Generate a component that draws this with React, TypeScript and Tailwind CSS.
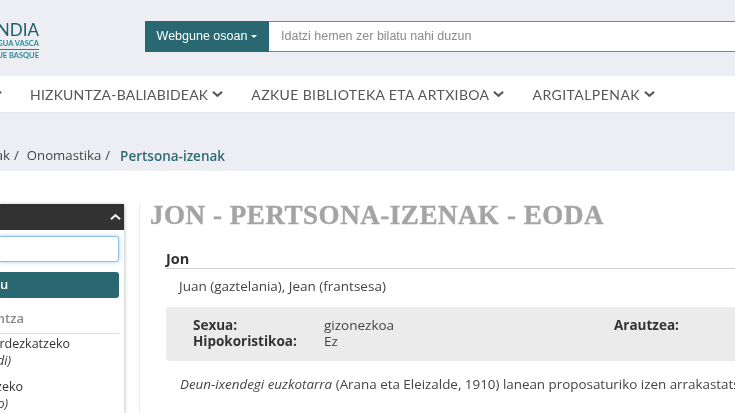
import React from "react";

const Chevron = ({ className = "" }: { className?: string }) => (
  <svg viewBox="0 0 12 8" className={"w-[11px] h-[8px] " + className} fill="none" stroke="#55565a" strokeWidth="2.2">
    <path d="M1 1.5 L6 6 L11 1.5" />
  </svg>
);

const NavItem = ({ label, textClass }: { label: string; textClass: string }) => (
  <div className="flex items-center gap-[4px] ml-[28px]">
    <span className={"whitespace-nowrap text-[14px] text-[#55565a] " + textClass}>{label}</span>
    <Chevron />
  </div>
);

export default function App() {
  return (
    <div className="w-[735px] h-[413px] overflow-hidden bg-white font-['Open_Sans',sans-serif] blur-[0.5px]">
      <div className="bg-[#eceef3] h-[171px] flex flex-col">
        <div className="h-[76px] flex items-start">
          <div className="w-[145px] shrink-0 pt-[21px]">
            <div className="w-[39px] overflow-hidden flex flex-col items-end text-[#1d5f6c]">
              <div className="font-['Lato',sans-serif] text-[17px] leading-[17px] whitespace-nowrap">EUSKALTZAINDIA</div>
              <div className="mt-[2px] w-[39px] flex justify-end border-b border-[#2a7f88] pb-[1px]">
                <span className="font-['Lato',sans-serif] text-[7.5px] leading-[8px] font-bold whitespace-nowrap text-[#2a8a94]">LENGUA VASCA</span>
              </div>
              <div className="w-[39px] flex justify-end mt-[1px]">
                <span className="font-['Lato',sans-serif] text-[7.5px] leading-[9px] font-bold whitespace-nowrap text-[#2a8a94]">LANGUE BASQUE</span>
              </div>
            </div>
          </div>
          <div className="mt-[21px] h-[31px] flex-1 flex min-w-0 font-['Liberation_Sans',sans-serif]">
            <div className="w-[124px] shrink-0 bg-[#2a6871] text-white text-[12.5px] flex items-center justify-center gap-[4px]">
              <span>Webgune osoan</span>
              <span className="w-0 h-0 border-l-[3px] border-r-[3px] border-t-[3px] border-l-transparent border-r-transparent border-t-white" />
            </div>
            <div className="flex-1 bg-white border-y border-[#6f8a90] flex items-center pl-[12px] text-[12.5px] text-[#8a8a8a]">
              Idatzi hemen zer bilatu nahi duzun
            </div>
          </div>
        </div>
        <div className="h-[37px] bg-white border-b border-[#e2e4e9] flex items-center font-['Lato',sans-serif] shrink-0">
          <div className="w-[2px] overflow-hidden flex justify-end"><Chevron className="shrink-0" /></div>
          <NavItem label="HIZKUNTZA-BALIABIDEAK" textClass="tracking-[0.2px]" />
          <NavItem label="AZKUE BIBLIOTEKA ETA ARTXIBOA" textClass="tracking-[0.37px]" />
          <NavItem label="ARGITALPENAK" textClass="tracking-[0.45px]" />
        </div>
        <div className="flex-1 flex items-center pt-[28px] text-[13.2px] text-[#444]">
          <div className="w-[10px] overflow-hidden flex justify-end shrink-0"><span className="whitespace-nowrap">Hizkuntza-baliabideak</span></div>
          <span className="ml-[4px]">/</span>
          <span className="ml-[8px]">Onomastika</span>
          <span className="ml-[4px]">/</span>
          <span className="ml-[10px] text-[13.5px] font-semibold text-[#2f6a74]">Pertsona-izenak</span>
        </div>
      </div>
      <div className="flex pt-[33px] h-[242px]">
        <aside className="w-[124px] shrink-0 shadow-[0_1px_4px_rgba(0,0,0,0.35)] bg-white">
          <div className="h-[26px] bg-[#333232] flex items-center justify-end pr-[3px]">
            <svg viewBox="0 0 12 8" className="w-[11px] h-[8px]" fill="none" stroke="#eee" strokeWidth="2.2"><path d="M1 6.5 L6 2 L11 6.5" /></svg>
          </div>
          <div className="pr-[5px]">
            <div className="mt-[6px] h-[26px] rounded-r-[3px] bg-white border border-l-0 border-[#8fc0e4] shadow-[0_0_4px_rgba(102,175,233,0.6)]" />
            <div className="mt-[10px] h-[26px] rounded-r-[3px] bg-[#2a6871] text-white text-[13px] font-semibold flex items-center">u</div>
            <div className="mt-[11px] h-[25px] border-b border-[#ddd] flex justify-end pr-[95px] overflow-hidden">
              <span className="text-[13px] font-semibold text-[#8a8a8a] whitespace-nowrap">Hizkuntza</span>
            </div>
            <div className="text-[12.5px] leading-[17px] text-[#333] overflow-hidden">
              <div className="flex justify-end pr-[49px] whitespace-nowrap mt-[1px]">Ordezkatzeko</div>
              <div className="flex justify-end pr-[108px] whitespace-nowrap italic">(di)</div>
              <div className="flex justify-end pr-[96px] whitespace-nowrap mt-[9px]">Aldatzeko</div>
              <div className="flex justify-end pr-[111px] whitespace-nowrap italic">(o)</div>
            </div>
          </div>
        </aside>
        <main className="ml-[15px] flex-1 min-w-0 border-l border-[#ececec] pl-[10px]">
          <h1 className="font-['Liberation_Serif',serif] font-bold text-[27px] leading-[24px] mt-[-1px] tracking-[0.55px] [-webkit-text-stroke:0.4px_#a4a4a4] text-[#a4a4a4] whitespace-nowrap">JON - PERTSONA-IZENAK - EODA</h1>
          <div className="ml-[16px] mt-[22px]">
            <div className="h-[20px] border-b border-[#cfcfcf] text-[14.5px] leading-[20px] font-bold text-[#333]">Jon</div>
            <div className="ml-[13px] mt-[7px] text-[13.5px] leading-[20px] text-[#444]">Juan (gaztelania), Jean (frantsesa)</div>
            <div className="mt-[11px] h-[54px] bg-[#ebebeb] rounded-l-[4px] pl-[27px] pt-[10px] text-[13.5px] leading-[16px] text-[#444] flex">
              <div className="w-[131px] shrink-0 font-bold text-[#333]"><div>Sexua:</div><div>Hipokoristikoa:</div></div>
              <div className="w-[290px] shrink-0"><div>gizonezkoa</div><div>Ez</div></div>
              <div className="font-bold text-[#333]">Arautzea:</div>
            </div>
            <div className="ml-[14px] mt-[13px] text-[13.4px] leading-[20px] text-[#444] whitespace-nowrap"><i>Deun-ixendegi euzkotarra</i> (Arana eta Eleizalde, 1910) lanean proposaturiko izen arrakastatsuenetako bat</div>
          </div>
        </main>
      </div>
    </div>
  );
}
